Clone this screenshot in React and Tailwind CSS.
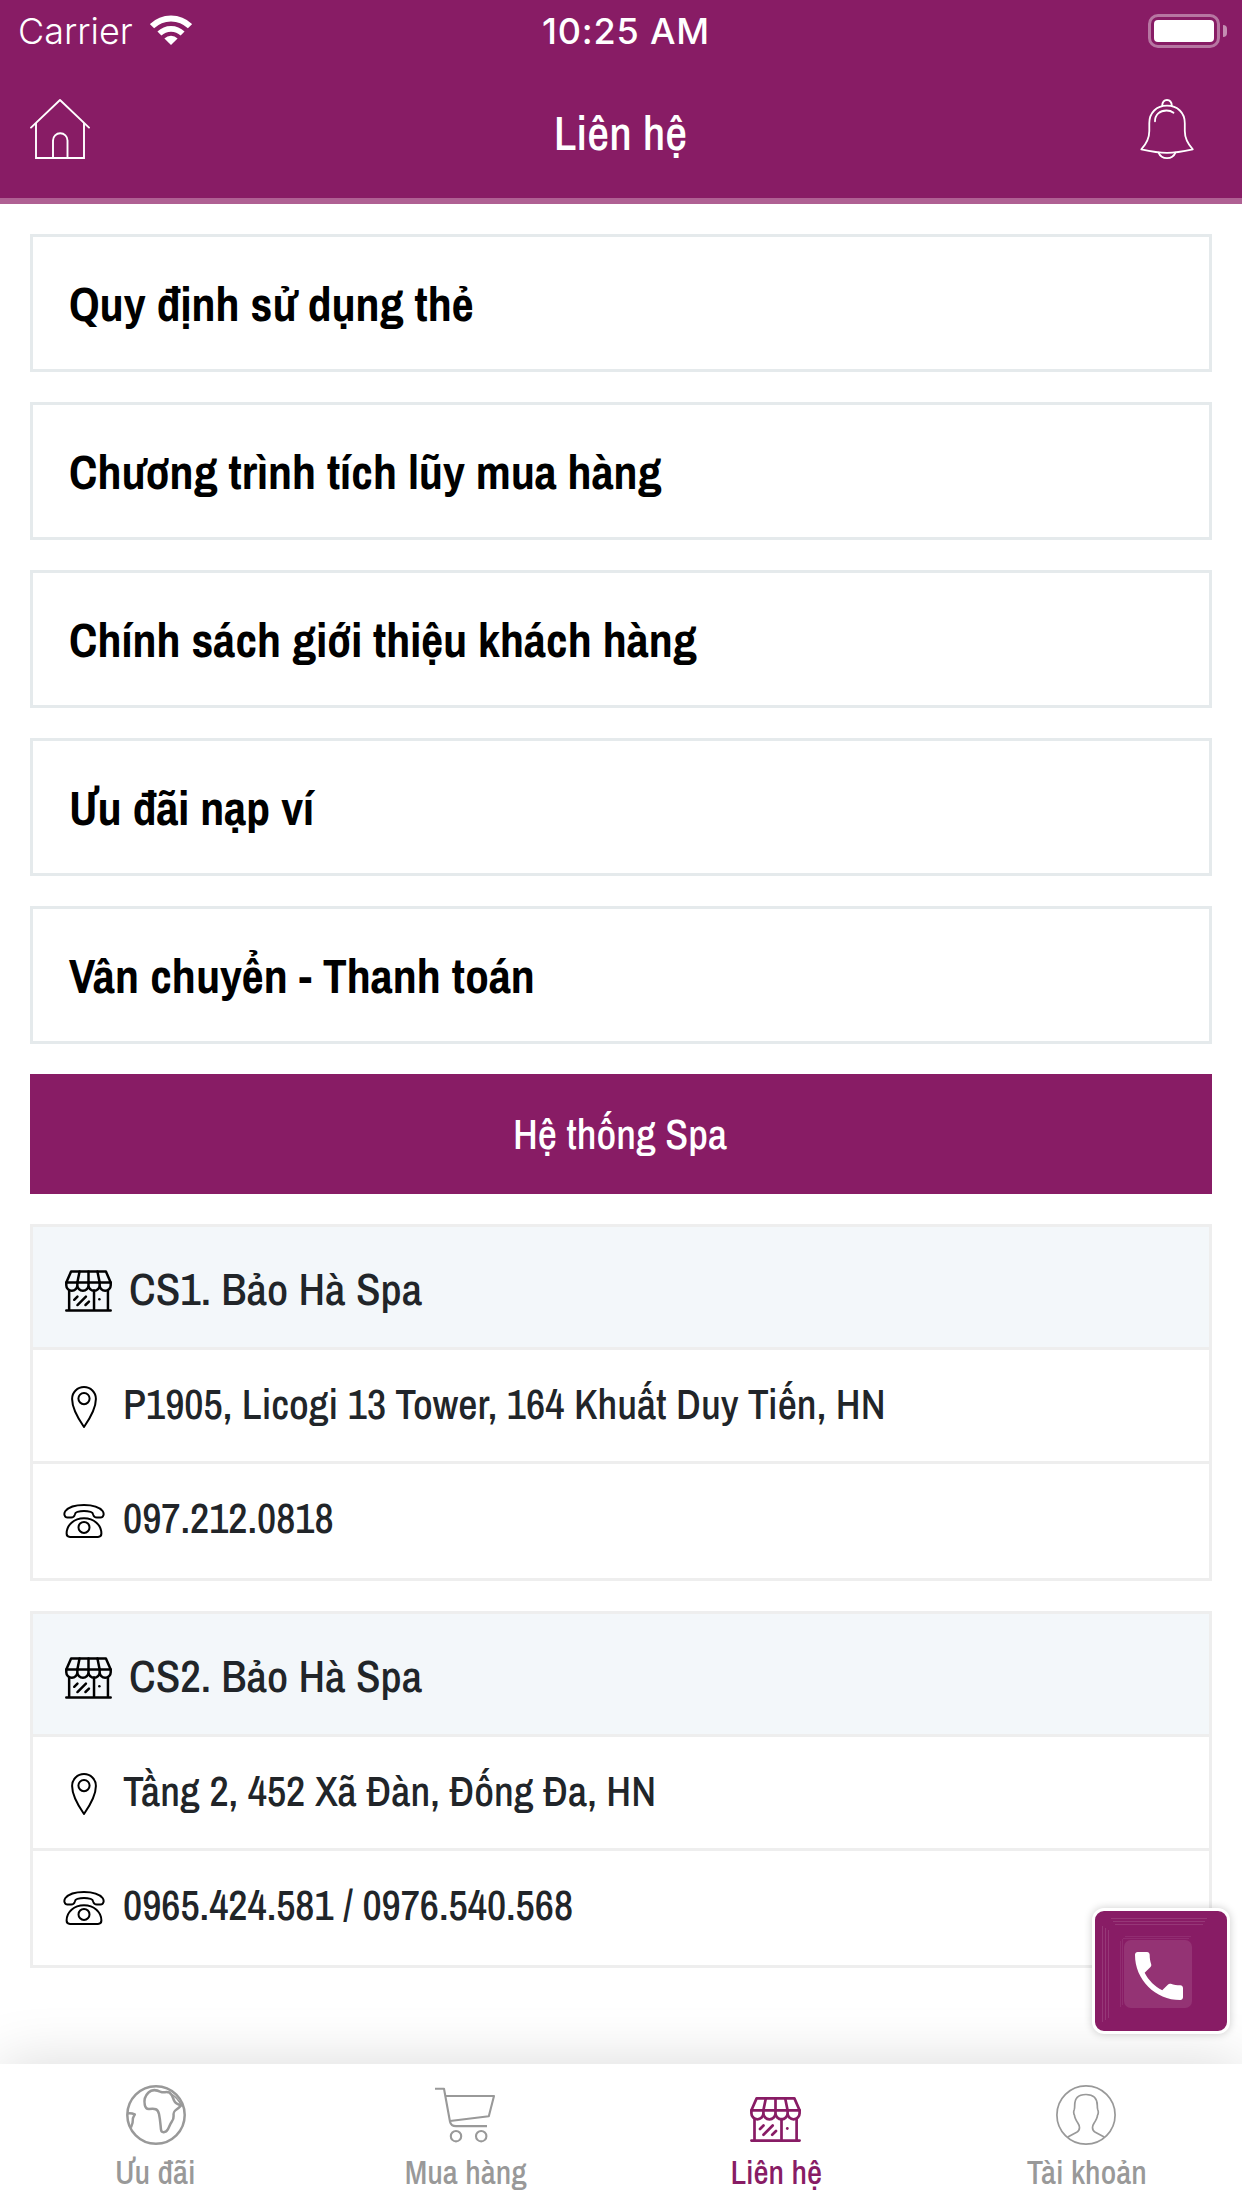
const policies = [
  'Quy định sử dụng thẻ',
  'Chương trình tích lũy mua hàng',
  'Chính sách giới thiệu khách hàng',
  'Ưu đãi nạp ví',
  'Vân chuyển - Thanh toán',
];

const branches = [
  {
    name: 'CS1. Bảo Hà Spa',
    address: 'P1905, Licogi 13 Tower, 164 Khuất Duy Tiến, HN',
    phone: '097.212.0818',
  },
  {
    name: 'CS2. Bảo Hà Spa',
    address: 'Tầng 2, 452 Xã Đàn, Đống Đa, HN',
    phone: '0965.424.581 / 0976.540.568',
  },
];

function WifiIcon() {
  return (
    <svg className="h-[30px] w-[42px]" viewBox="0 0 42 30" fill="none" stroke="currentColor">
      <path d="M2 11.2a27 27 0 0 1 38 0" strokeWidth="6" />
      <path d="M9.4 18.6a16.5 16.5 0 0 1 23.2 0" strokeWidth="5.6" />
      <path d="M21 30l-6.600-6.600a9.400 9.400 0 0 1 13.200 0z" fill="currentColor" stroke="none" />
    </svg>
  );
}

function Battery() {
  return (
    <div className="flex items-center">
      <div className="h-[34px] w-[72px] rounded-[10px] border-3 border-white/40 p-[3px]">
        <div className="h-full w-full rounded-[4px] bg-white" />
      </div>
      <div className="ml-[3px] h-3 w-1 rounded-r-full bg-white/50" />
    </div>
  );
}

function HomeIcon() {
  return (
    <svg className="size-[60px]" viewBox="0 0 60 60" fill="none" stroke="currentColor" strokeWidth="1.9">
      <path d="M1 28.6L30 1l29 27.6" strokeLinejoin="round" strokeLinecap="round" />
      <path d="M6 24v35h48V24M23 59V41.5a7.2 7.2 0 0 1 14.5 0V59" />
    </svg>
  );
}

function BellIcon() {
  return (
    <svg className="size-[60px]" viewBox="0 0 60 60" fill="none" stroke="currentColor" strokeWidth="1.8" strokeLinejoin="round" strokeLinecap="round">
      <path d="M30 6.7c-10.500 0-17.700 7-17.700 17.500V32c0 8-3.500 13.500-8 18.300C12 52 21 53.800 30 53.800s18-1.800 25.800-3.500c-4.500-4.800-8-10.300-8-18.300v-7.800C47.800 13.700 40.500 6.700 30 6.700z" />
      <path d="M25.200 6.800C25.400 3 27.200 1 30 1s4.600 2 4.800 5.800M21.500 53.600c1.500 3.500 4.700 5.500 8.500 5.500s7-2 8.500-5.500M18 22.300c0-6.800 4.800-10.800 11.500-10.800 3 0 5.200.8 7 2.200" />
    </svg>
  );
}

function StoreIcon({ className }) {
  return (
    <svg className={className} viewBox="0 0 51 45" fill="none" stroke="currentColor" strokeWidth="2.7" strokeLinejoin="round" strokeLinecap="round">
      <path d="M1.400 13.300L6.600 1.400h37.800l5.200 11.900z" />
      <path d="M15.800 1.400l-2.400 11.900M25.500 1.400v11.900M35.200 1.400l2.400 11.900" />
      <path d="M1.400 13.300v3a6 6 0 0 0 12 0v-3m0 3a6 6 0 0 0 12.100 0v-3m0 3a6 6 0 0 0 12.100 0v-3m0 3a6 6 0 0 0 12 0v-3" />
      <path d="M4.500 22v21.600M46.600 22v21.600M31.500 22v21.600M1.400 43.600h48.200" />
      <path d="M10 32l3.500-3.500M13.500 37.700l9.200-9.200M22.200 37.700l3.800-3.700" />
      <circle cx="37.300" cy="31.500" r="1.400" fill="currentColor" stroke="none" />
    </svg>
  );
}

function PinIcon() {
  return (
    <svg className="size-[42px]" viewBox="0 0 42 42" fill="none" stroke="currentColor" strokeWidth="2">
      <path d="M21 41C15.500 33 9.100 22.500 9.100 12.900a11.900 11.900 0 0 1 23.800 0C32.900 22.500 26.500 33 21 41z" strokeLinejoin="round" />
      <circle cx="21" cy="12.600" r="5.600" />
    </svg>
  );
}

function TelephoneIcon() {
  return (
    <svg className="size-[42px]" viewBox="0 0 42 42" fill="none" stroke="currentColor" strokeWidth="2" strokeLinejoin="round">
      <path d="M21 4.900C12.500 4.900 5.500 7 2.400 11c-2 2.700-.9 6.600 2 6.600h3.700c2 0 3.200-.9 3.600-2.700.3-1.600.9-2.600 2.600-3 4.200-1 9.200-1 13.400 0 1.700.4 2.300 1.400 2.600 3 .4 1.800 1.600 2.700 3.600 2.700h3.700c2.900 0 4-3.900 2-6.600C36.500 7 29.500 4.900 21 4.900z" />
      <path d="M21 18.200C11 18.200 3.600 25 3.600 33.500c0 2.200 1.300 3.400 3.400 3.400h28c2.100 0 3.400-1.200 3.400-3.400C38.400 25 31 18.200 21 18.200z" />
      <circle cx="21" cy="27.400" r="5.500" />
    </svg>
  );
}

function GlobeIcon() {
  return (
    <svg className="ml-px size-[60px]" viewBox="0 0 60 60" fill="none" stroke="currentColor" strokeWidth="2.500" strokeLinejoin="round">
      <circle cx="30" cy="30" r="28.700" />
      <path d="M35 7c-5-2.500-9.500-2.500-12.500.5-3.500 3.300-4.500 8.500-3.700 12.500.6 3 2 4.300 4.500 4 5.500-.7 8.500-.3 9.700 5 1.300 6 1.500 11.500 2 15.500.2 2 1.200 2.800 2.800 2.700 2-.1 3.200-1.200 4.200-3 1.500-2.800 2-5 3.600-7.200 1.500-2 2.200-3.600 2-6-.3-3.500.2-4.700 2.900-6.500 2.200-1.400 3.500-2.700 5-4.300-3.500-.4-6.500-2.200-7.700-5.200-1.300-3.300-1.800-5.500-4.300-7.500C41 6.600 38 7.600 35 7z" />
      <path d="M44 8.500c5.500 2.500 8.500 6.300 11.300 11.500" strokeWidth="1.800" />
      <path d="M2 28.400c2.500-.3 4.500 0 6.800 1-1 2.200-2.300 3-2 5.600.3 2.800-.7 4.600-2 7.500" />
    </svg>
  );
}

function CartIcon() {
  return (
    <svg className="mr-[2px] size-[60px]" viewBox="0 0 60 60" fill="none" stroke="currentColor" strokeWidth="2.100" strokeLinejoin="round">
      <path d="M0 3.700h9l6 33c.7 3 2.700 4.400 6 4.400h31" />
      <path d="M10.700 11H59l-5.200 20.300L15 36" />
      <circle cx="21" cy="51.200" r="5.200" />
      <circle cx="46.200" cy="51.200" r="5.200" />
    </svg>
  );
}

function UserIcon() {
  return (
    <svg className="mr-[2px] size-[60px]" viewBox="0 0 60 60" fill="none" stroke="currentColor" strokeWidth="1.700" strokeLinejoin="round">
      <circle cx="30" cy="30" r="29.100" />
      <path d="M11.800 52l8.900-4.700c2.200-1.300 2.800-2.500 2.800-4.800 0-2-.4-2.700-1.500-4.300-1.800-2.700-3.300-5-3.500-8-.9-1-1.100-4-.3-5.400.5-1 .5-2.300.5-4.300 0-7.200 3-11 11.300-11s11.300 3.800 11.300 11c0 2 0 3.300.5 4.300.8 1.400.6 4.400-.3 5.400-.2 3-1.700 5.300-3.500 8-1.100 1.600-1.500 2.300-1.500 4.300 0 2.300.6 3.500 2.800 4.800l8.900 4.700" />
    </svg>
  );
}

function CallIcon() {
  return (
    <svg className="mt-[3px] ml-0.5 size-16 shrink-0" viewBox="0 0 24 24" fill="currentColor">
      <path d="M6.620 10.790c1.440 2.830 3.760 5.140 6.590 6.590l2.200-2.200c.27-.27.67-.36 1.020-.24 1.120.37 2.330.57 3.570.57.55 0 1 .45 1 1V20c0 .55-.45 1-1 1-9.390 0-17-7.610-17-17 0-.55.45-1 1-1h3.500c.55 0 1 .45 1 1 0 1.250.2 2.450.57 3.570.11.35.03.74-.25 1.020l-2.200 2.200z" />
    </svg>
  );
}

function Header() {
  return (
    <header className="h-[204px] border-b-6 border-[#af6093] bg-[#881c65] text-white">
      <div className="grid h-[60px] grid-cols-3 font-[Inter,sans-serif] text-[36px] leading-[62px]">
        <div className="flex items-start pl-[18px]">
          <span className="font-light">Carrier</span>
          <span className="mt-[15px] ml-[17px]">
            <WifiIcon />
          </span>
        </div>
        <div className="pl-[10px] text-center font-medium tracking-[0.8px]">10:25 AM</div>
        <div className="flex justify-end pr-[15px]">
          <Battery />
        </div>
      </div>
      <div className="flex h-[138px] items-center justify-between pr-[45px] pl-[30px]">
        <HomeIcon />
        <h1 className="pt-[7px] pl-[14px] text-[48px] leading-[72px] font-medium">Liên hệ</h1>
        <BellIcon />
      </div>
    </header>
  );
}

function Branch({ branch }) {
  return (
    <section className="border-3 border-[#eeeeee] bg-white">
      <div className="flex h-[123px] items-start border-b-3 border-[#eeeeee] bg-[#f3f7fa] pl-8">
        <StoreIcon className="mt-[43px] h-[42px] w-[47px] text-black" />
        <h2 className="pt-[27px] pl-[17px] text-[45px] leading-[69px] font-medium">{branch.name}</h2>
      </div>
      <div className="flex h-[114px] items-start gap-[18px] border-b-3 border-[#eeeeee] pl-[30px]">
        <span className="mt-9 text-black">
          <PinIcon />
        </span>
        <p className="pt-[23px] text-[42px] leading-[62px] font-medium tracking-[0.02px]">{branch.address}</p>
      </div>
      <div className="flex h-[114px] items-start gap-[18px] pl-[30px]">
        <span className="mt-9 text-black">
          <TelephoneIcon />
        </span>
        <p className="pt-[23px] text-[42px] leading-[62px] font-medium">{branch.phone}</p>
      </div>
    </section>
  );
}

function CallButton() {
  return (
    <button className="absolute top-[1908px] right-3 flex h-[126px] w-[138px] items-center justify-center rounded-[12px] border-3 border-white bg-[#881c65] text-white shadow-[0_0_9px_rgba(0,0,0,0.2)]">
      <span className="absolute top-[7px] left-4 h-px w-[96px] bg-white/12" />
      <span className="absolute top-[10px] left-[18px] h-px w-[92px] bg-white/12" />
      <span className="absolute top-[13px] left-5 h-px w-[88px] bg-white/12" />
      <span className="absolute top-[15px] left-[7px] h-[96px] w-px bg-white/12" />
      <span className="absolute top-[17px] left-[10px] h-[92px] w-px bg-white/12" />
      <span className="absolute top-[19px] left-[13px] h-[88px] w-px bg-white/12" />
      <span className="absolute top-[25px] left-[30px] h-px w-[66px] bg-white/8" />
      <span className="absolute top-[27px] left-[28px] h-px w-[66px] bg-white/8" />
      <span className="absolute top-[30px] left-[25px] h-[66px] w-px bg-white/8" />
      <span className="absolute top-[28px] left-[27px] h-[66px] w-px bg-white/8" />
      <span className="mt-[6px] mr-[6px] flex size-[68px] items-center justify-center rounded-[7px] bg-white/10">
        <CallIcon />
      </span>
    </button>
  );
}

function Tab({ icon, label, active }) {
  return (
    <div className={active ? 'flex flex-col items-center text-[#881c65]' : 'flex flex-col items-center text-[#999999]'}>
      <span className="mt-[21px] flex h-[60px] items-end">{icon}</span>
      <span className="mt-0.5 text-[33px] leading-[50px] font-medium">{label}</span>
    </div>
  );
}

export default function App() {
  return (
    <div className="relative flex h-[2208px] w-[1242px] flex-col overflow-hidden bg-white font-['Archivo_Narrow','Liberation_Sans',sans-serif] text-[#212529]">
      <Header />
      <main className="flex flex-1 flex-col gap-[30px] p-[30px]">
        {policies.map((title) => (
          <div key={title} className="h-[138px] border-3 border-[#e5eaec] px-9 pt-[31px] text-[48px] leading-[72px] font-bold text-black">
            {title}
          </div>
        ))}
        <button className="h-[120px] bg-[#881c65] pr-0.5 text-[42px] leading-[120px] font-medium text-white">Hệ thống Spa</button>
        {branches.map((branch) => (
          <Branch key={branch.name} branch={branch} />
        ))}
      </main>
      <nav className="grid h-[144px] grid-cols-4 bg-white shadow-[0_0_60px_rgba(0,0,0,0.15)]">
        <Tab icon={<GlobeIcon />} label="Ưu đãi" />
        <Tab icon={<CartIcon />} label="Mua hàng" />
        <Tab icon={<StoreIcon className="mr-[2px] mb-[3px] h-[45px] w-[51px]" />} label="Liên hệ" active />
        <Tab icon={<UserIcon />} label="Tài khoản" />
      </nav>
      <CallButton />
    </div>
  );
}
